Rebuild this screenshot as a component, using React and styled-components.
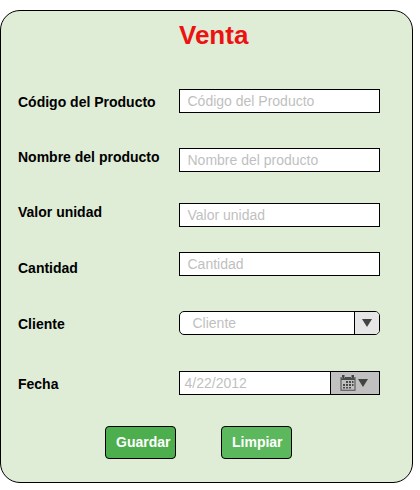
import React from "react";
import styled, { createGlobalStyle } from "styled-components";

const GlobalStyle = createGlobalStyle`
  *, *::before, *::after { box-sizing: border-box; }
  body {
    margin: 0;
    background: #fff;
    font-family: "Liberation Sans", Arial, sans-serif;
    font-size: 14px;
  }
`;

const Card = styled.form`
  width: 413px;
  height: 473px;
  margin-top: 10px;
  border: 1px solid #000;
  border-radius: 20px;
  background: #dfecd6;
  display: flex;
  flex-direction: column;
`;

const Title = styled.h1`
  margin: 9px 0 0 178px;
  height: 30px;
  line-height: 30px;
  font-size: 26px;
  font-weight: bold;
  color: #ec1212;
`;

const Row = styled.div`
  display: grid;
  grid-template-columns: 161px 201px;
  height: 24px;
  margin-left: 17px;
  margin-top: ${(p) => p.$gap}px;
`;

const Label = styled.label`
  line-height: 24px;
  margin-top: ${(p) => p.$shift}px;
  font-weight: bold;
  color: #000;
  white-space: nowrap;
`;

const Field = styled.div`
  display: flex;
  height: 24px;
  border: 1px solid #000;
  border-radius: ${(p) => (p.$rounded ? 5 : 0)}px;
  background: #fff;
  overflow: hidden;
`;

const Value = styled.span`
  flex: 1;
  padding-left: ${(p) => p.$inset}px;
  line-height: 22px;
  color: #bfbfbf;
  white-space: nowrap;
`;

const Trigger = styled.span`
  display: flex;
  align-items: center;
  gap: 2px;
  width: ${(p) => p.$width}px;
  padding-left: ${(p) => p.$inset}px;
  border-left: 1px solid #000;
  background: ${(p) => p.$bg};
`;

const Actions = styled.div`
  display: flex;
  gap: 45px;
  margin: 31px 0 0 104px;
`;

const Button = styled.button`
  width: 71px;
  height: 33px;
  padding: 0 0 0 10px;
  border: 1px solid #000;
  border-radius: 4px;
  background: ${(p) => p.$bg};
  color: #fff;
  font: bold 14px/31px "Liberation Sans", Arial, sans-serif;
  text-align: left;
`;

const Arrow = () => (
  <svg width="10" height="8" viewBox="0 0 10 8">
    <path d="M0 0H10L5 8Z" fill="#434343" />
  </svg>
);

const Calendar = () => (
  <svg width="16" height="16" viewBox="0 0 16 16">
    <path
      d="M0.5 2H15.5V15.7H0.5ZM1.5 5V14.7H14.5V5Z"
      fill="#4c4c4c"
      fillRule="evenodd"
    />
    <path d="M2 0H4.5V3H2ZM11.5 0H14V3H11.5Z" fill="#434343" />
    <path d="M1.5 2V3.5H2.5V2ZM4.2 2V3H5V2ZM11 2V3H11.8V2ZM13.8 2V3.5H14.5V2Z" fill="#9a9a9a" />
    <path
      d="M6 6h2v2H6zM9 6h2v2H9zM12 6h1.5v2H12zM3 9h2v2H3zM6 9h2v2H6zM9 9h2v2H9zM12 9h1.5v2H12zM3 12h2v1.5H3zM6 12h2v1.5H6zM9 12h2v1.5H9z"
      fill="#4a4a4a"
    />
  </svg>
);

const fields = [
  { label: "Código del Producto", gap: 39, shift: 1 },
  { label: "Nombre del producto", gap: 35, shift: -3 },
  { label: "Valor unidad", gap: 31, shift: -3 },
  { label: "Cantidad", gap: 25, shift: 4 },
];

export default function App() {
  return (
    <>
      <GlobalStyle />
      <Card>
        <Title>Venta</Title>
        {fields.map((f) => (
          <Row key={f.label} $gap={f.gap}>
            <Label $shift={f.shift}>{f.label}</Label>
            <Field>
              <Value $inset={7.5}>{f.label}</Value>
            </Field>
          </Row>
        ))}
        <Row $gap={35}>
          <Label $shift={1}>Cliente</Label>
          <Field $rounded>
            <Value $inset={12.5}>Cliente</Value>
            <Trigger $width={25} $inset={7} $bg="#e6e6e6">
              <Arrow />
            </Trigger>
          </Field>
        </Row>
        <Row $gap={36}>
          <Label $shift={1}>Fecha</Label>
          <Field>
            <Value $inset={4.5}>4/22/2012</Value>
            <Trigger $width={49} $inset={9} $bg="#c0c0c0">
              <Calendar />
              <Arrow />
            </Trigger>
          </Field>
        </Row>
        <Actions>
          <Button type="button" $bg="#4cae4c">Guardar</Button>
          <Button type="button" $bg="#5cb85c">Limpiar</Button>
        </Actions>
      </Card>
    </>
  );
}
